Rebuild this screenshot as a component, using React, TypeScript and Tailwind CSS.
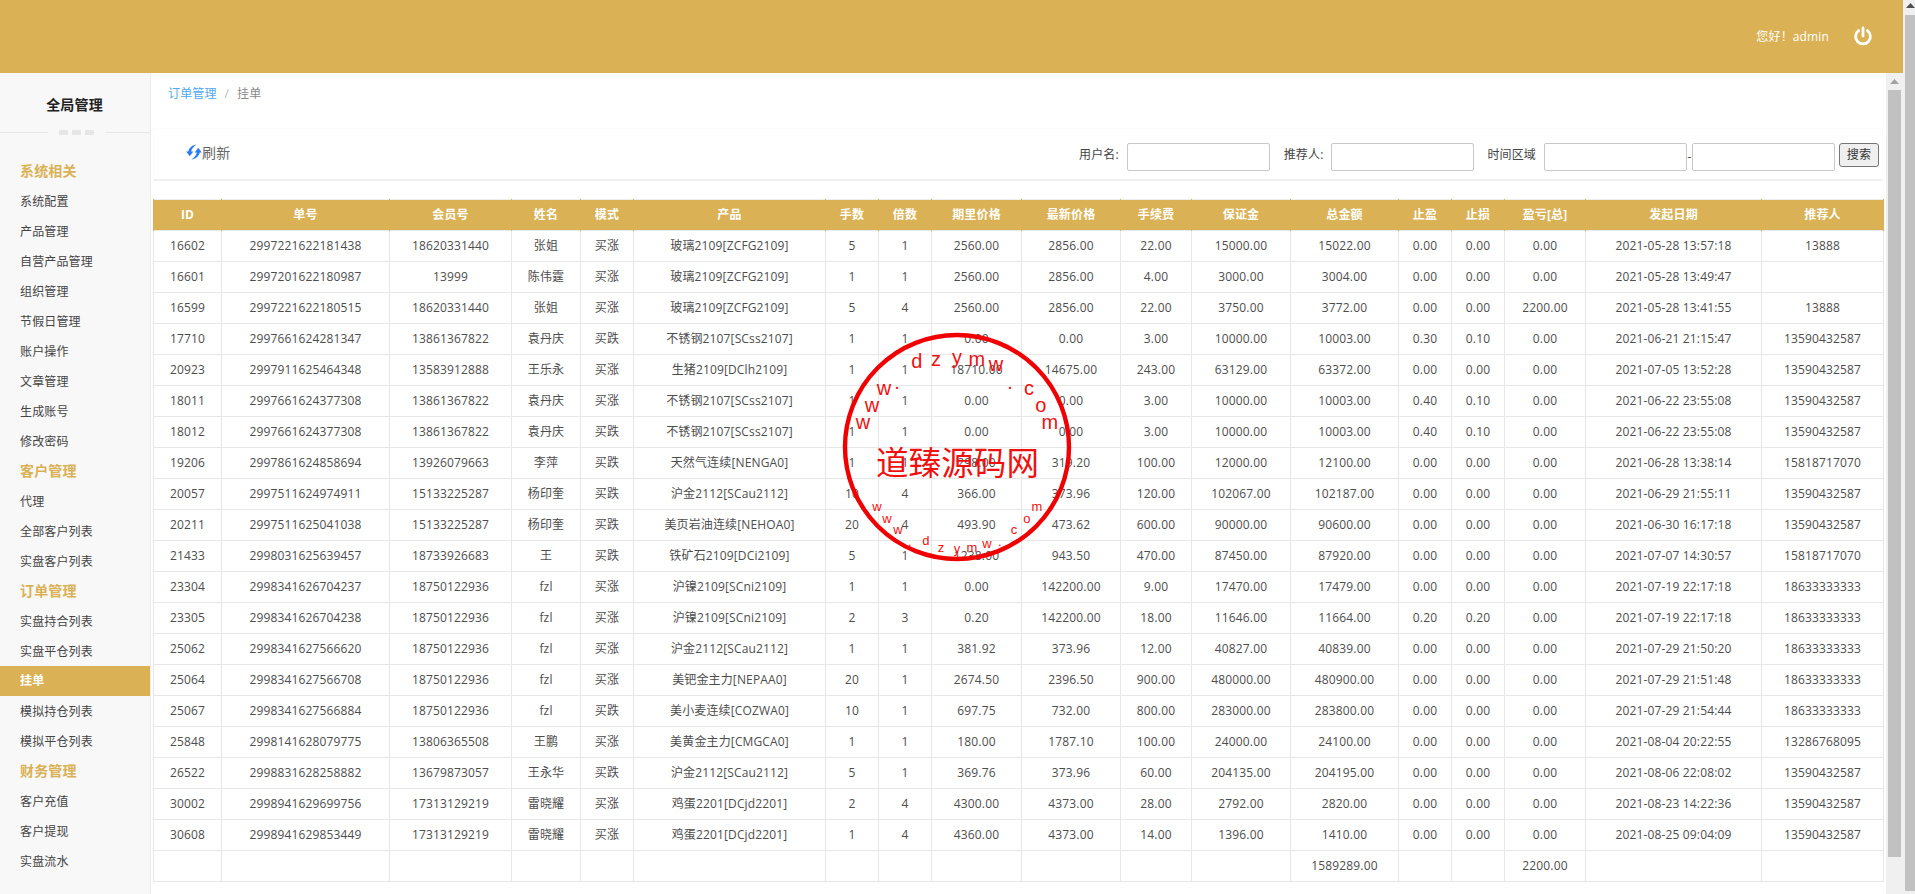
import { Fragment } from "react";

const GOLD = "bg-[#dab154]";

const menu = [
  { group: "系统相关", items: ["系统配置", "产品管理", "自营产品管理", "组织管理", "节假日管理", "账户操作", "文章管理", "生成账号", "修改密码"] },
  { group: "客户管理", items: ["代理", "全部客户列表", "实盘客户列表"] },
  { group: "订单管理", items: ["实盘持合列表", "实盘平仓列表", "挂单", "模拟持仓列表", "模拟平仓列表"] },
  { group: "财务管理", items: ["客户充值", "客户提现", "实盘流水"] },
];

const columns = [
  { title: "ID", width: "w-[68px]" },
  { title: "单号", width: "w-[168px]" },
  { title: "会员号", width: "w-[122px]" },
  { title: "姓名", width: "w-[69px]" },
  { title: "模式", width: "w-[53px]" },
  { title: "产品", width: "w-[192px]" },
  { title: "手数", width: "w-[53px]" },
  { title: "倍数", width: "w-[53px]" },
  { title: "期里价格", width: "w-[90px]" },
  { title: "最新价格", width: "w-[99px]" },
  { title: "手续费", width: "w-[71px]" },
  { title: "保证金", width: "w-[99px]" },
  { title: "总金额", width: "w-[108px]" },
  { title: "止盈", width: "w-[53px]" },
  { title: "止损", width: "w-[53px]" },
  { title: "盈亏[总]", width: "w-[81px]" },
  { title: "发起日期", width: "w-[176px]" },
  { title: "推荐人", width: "w-[122px]" },
];

const R = "13590432587";
const F = "18633333333";
const rows = [
  ["16602", "2997221622181438", "18620331440", "张姐", "买涨", "玻璃2109[ZCFG2109]", "5", "1", "2560.00", "2856.00", "22.00", "15000.00", "15022.00", "0.00", "0.00", "0.00", "2021-05-28 13:57:18", "13888"],
  ["16601", "2997201622180987", "13999", "陈伟霆", "买涨", "玻璃2109[ZCFG2109]", "1", "1", "2560.00", "2856.00", "4.00", "3000.00", "3004.00", "0.00", "0.00", "0.00", "2021-05-28 13:49:47", ""],
  ["16599", "2997221622180515", "18620331440", "张姐", "买涨", "玻璃2109[ZCFG2109]", "5", "4", "2560.00", "2856.00", "22.00", "3750.00", "3772.00", "0.00", "0.00", "2200.00", "2021-05-28 13:41:55", "13888"],
  ["17710", "2997661624281347", "13861367822", "袁丹庆", "买跌", "不锈钢2107[SCss2107]", "1", "1", "0.00", "0.00", "3.00", "10000.00", "10003.00", "0.30", "0.10", "0.00", "2021-06-21 21:15:47", R],
  ["20923", "2997911625464348", "13583912888", "王乐永", "买涨", "生猪2109[DClh2109]", "1", "1", "18710.00", "14675.00", "243.00", "63129.00", "63372.00", "0.00", "0.00", "0.00", "2021-07-05 13:52:28", R],
  ["18011", "2997661624377308", "13861367822", "袁丹庆", "买涨", "不锈钢2107[SCss2107]", "1", "1", "0.00", "0.00", "3.00", "10000.00", "10003.00", "0.40", "0.10", "0.00", "2021-06-22 23:55:08", R],
  ["18012", "2997661624377308", "13861367822", "袁丹庆", "买跌", "不锈钢2107[SCss2107]", "1", "1", "0.00", "0.00", "3.00", "10000.00", "10003.00", "0.40", "0.10", "0.00", "2021-06-22 23:55:08", R],
  ["19206", "2997861624858694", "13926079663", "李萍", "买跌", "天然气连续[NENGA0]", "1", "1", "298.00", "319.20", "100.00", "12000.00", "12100.00", "0.00", "0.00", "0.00", "2021-06-28 13:38:14", "15818717070"],
  ["20057", "2997511624974911", "15133225287", "杨印奎", "买跌", "沪金2112[SCau2112]", "10", "4", "366.00", "373.96", "120.00", "102067.00", "102187.00", "0.00", "0.00", "0.00", "2021-06-29 21:55:11", R],
  ["20211", "2997511625041038", "15133225287", "杨印奎", "买跌", "美页岩油连续[NEHOA0]", "20", "4", "493.90", "473.62", "600.00", "90000.00", "90600.00", "0.00", "0.00", "0.00", "2021-06-30 16:17:18", R],
  ["21433", "2998031625639457", "18733926683", "王", "买跌", "铁矿石2109[DCi2109]", "5", "1", "1238.00", "943.50", "470.00", "87450.00", "87920.00", "0.00", "0.00", "0.00", "2021-07-07 14:30:57", "15818717070"],
  ["23304", "2998341626704237", "18750122936", "fzl", "买涨", "沪镍2109[SCni2109]", "1", "1", "0.00", "142200.00", "9.00", "17470.00", "17479.00", "0.00", "0.00", "0.00", "2021-07-19 22:17:18", F],
  ["23305", "2998341626704238", "18750122936", "fzl", "买涨", "沪镍2109[SCni2109]", "2", "3", "0.20", "142200.00", "18.00", "11646.00", "11664.00", "0.20", "0.20", "0.00", "2021-07-19 22:17:18", F],
  ["25062", "2998341627566620", "18750122936", "fzl", "买涨", "沪金2112[SCau2112]", "1", "1", "381.92", "373.96", "12.00", "40827.00", "40839.00", "0.00", "0.00", "0.00", "2021-07-29 21:50:20", F],
  ["25064", "2998341627566708", "18750122936", "fzl", "买涨", "美钯金主力[NEPAA0]", "20", "1", "2674.50", "2396.50", "900.00", "480000.00", "480900.00", "0.00", "0.00", "0.00", "2021-07-29 21:51:48", F],
  ["25067", "2998341627566884", "18750122936", "fzl", "买跌", "美小麦连续[COZWA0]", "10", "1", "697.75", "732.00", "800.00", "283000.00", "283800.00", "0.00", "0.00", "0.00", "2021-07-29 21:54:44", F],
  ["25848", "2998141628079775", "13806365508", "王鹏", "买涨", "美黄金主力[CMGCA0]", "1", "1", "180.00", "1787.10", "100.00", "24000.00", "24100.00", "0.00", "0.00", "0.00", "2021-08-04 20:22:55", "13286768095"],
  ["26522", "2998831628258882", "13679873057", "王永华", "买跌", "沪金2112[SCau2112]", "5", "1", "369.76", "373.96", "60.00", "204135.00", "204195.00", "0.00", "0.00", "0.00", "2021-08-06 22:08:02", R],
  ["30002", "2998941629699756", "17313129219", "雷晓耀", "买涨", "鸡蛋2201[DCjd2201]", "2", "4", "4300.00", "4373.00", "28.00", "2792.00", "2820.00", "0.00", "0.00", "0.00", "2021-08-23 14:22:36", R],
  ["30608", "2998941629853449", "17313129219", "雷晓耀", "买涨", "鸡蛋2201[DCjd2201]", "1", "4", "4360.00", "4373.00", "14.00", "1396.00", "1410.00", "0.00", "0.00", "0.00", "2021-08-25 09:04:09", R],
  ["", "", "", "", "", "", "", "", "", "", "", "", "1589289.00", "", "", "2200.00", "", ""],
];

// watermark letters: [char, x, y] inside the 260px stamp box
const stampTop: [string, number, number][] = [
  ["w", 43, 102], ["w", 52, 85], ["w", 64, 68], [".", 77, 62], ["d", 97, 41], ["z", 116, 39], ["y", 137, 37],
  ["m", 157, 39], ["w", 176, 44], [".", 190, 62], ["c", 209, 68], ["o", 221, 85], ["m", 230, 102],
];
const stampBottom: [string, number, number][] = [
  ["w", 57, 186], ["w", 67, 198], ["w", 78, 209], [".", 90, 221], ["d", 106, 220], ["z", 121, 227], ["y", 137, 228],
  ["m", 152, 227], ["w", 167, 223], [".", 180, 221], ["c", 194, 209], ["o", 207, 198], ["m", 217, 186],
];

function Arrow({ color }: { color: string }) {
  return (
    <svg width="9" height="5" viewBox="0 0 9 5" className="block">
      <path d="M4.5 0 9 5H0z" fill={color} />
    </svg>
  );
}

function Field({ label, gap }: { label: string; gap: string }) {
  return (
    <div className={`flex items-start ${gap}`}>
      <span className="h-[24px] leading-[24px] text-[12px] text-[#444] mr-[8px]">{label}</span>
      <input className="w-[143px] h-[28px] bg-white border border-[#c8c8c8] rounded-[2px]" />
    </div>
  );
}

function Sidebar() {
  return (
    <aside className="w-[151px] shrink-0 bg-[#f8f8f8] border-r border-[#ececec]">
      <div className="h-[57px] pt-[5px] flex items-center justify-center text-[14px] font-bold text-[#222] pr-[1px]">
        全局管理
      </div>
      <div className="flex items-center h-[5px]">
        <div className="w-[48px] h-[1px] bg-[#e6e6e6]" />
        <div className="flex gap-[4px] ml-[11px]">
          <div className="w-[9px] h-[5px] bg-[#e6e6e6]" />
          <div className="w-[9px] h-[5px] bg-[#e6e6e6]" />
          <div className="w-[9px] h-[5px] bg-[#e6e6e6]" />
        </div>
        <div className="flex-1 ml-[11px] h-[1px] bg-[#e6e6e6]" />
      </div>
      <nav className="mt-[21px]">
        {menu.map((m) => (
          <Fragment key={m.group}>
            <div className="h-[30px] leading-[30px] pl-[20px] text-[14px] font-bold text-[#dab154]">{m.group}</div>
            {m.items.map((item) =>
              item === "挂单" ? (
                <div key={item} className={`h-[30px] leading-[30px] pl-[20px] text-[12px] font-bold text-white ${GOLD}`}>
                  {item}
                </div>
              ) : (
                <div key={item} className="h-[30px] leading-[32px] pl-[20px] text-[12px] text-[#444]">
                  {item}
                </div>
              )
            )}
          </Fragment>
        ))}
      </nav>
    </aside>
  );
}

export default function App() {
  return (
    <div className="relative flex w-[1915px] h-[894px] overflow-hidden bg-white font-['Open_Sans','Noto_Sans_CJK_SC',sans-serif] tracking-[0.14px]">
      <div className="w-[1903px] shrink-0 flex flex-col">
        {/* top bar */}
        <header className={`h-[73px] shrink-0 flex items-center justify-end text-white ${GOLD}`}>
          <span className="text-[12px] mr-[24px]">您好！admin</span>
          <svg width="20" height="20" viewBox="0 0 20 20" fill="none" stroke="white" strokeWidth="2.8" strokeLinecap="round" className="mr-[30px] mb-[1px]">
            <path d="M10 2v8" />
            <path d="M5.6 4.6a7.4 7.4 0 1 0 8.8 0" />
          </svg>
        </header>

        <div className="flex flex-1 min-h-0">
          <Sidebar />

          <main className="flex-1 pl-[2px] min-w-0">
            <div className="h-[55px] pl-[15px] pt-[12px] text-[12px] leading-[18px]">
              <span className="text-[#4fa8ef]">订单管理</span>
              <span className="text-[#bbb] mx-[8px]">/</span>
              <span className="text-[#888]">挂单</span>
            </div>

            {/* toolbar */}
            <div className="w-[1730px] h-[53px] border border-b-2 border-[#fbfbfb] border-b-[#f0f0f0] flex items-start pt-[14px] pr-[3px]">
              <div className="flex items-center ml-[32px] mt-[-3px] h-[24px]">
                <svg width="16" height="16" viewBox="0 0 16 16" fill="#2b7bf2">
                  <path d="M10.5.6C6.6 1 3 3.6 2.3 7.6H.2l3.5 4.6 3.6-4.6H5.2c.4-2.8 2.5-5 5.3-7z" />
                  <path d="M5.5 15.4c3.9-.4 7.5-3 8.2-7h2.1l-3.5-4.6-3.6 4.6h2.1c-.4 2.8-2.5 5-5.3 7z" />
                </svg>
                <span className="text-[14px] text-[#666]">刷新</span>
              </div>
              <div className="flex-1" />
              <Field label="用户名:" gap="" />
              <Field label="推荐人:" gap="ml-[14px]" />
              <div className="flex items-start ml-[13px]">
                <span className="h-[24px] leading-[24px] text-[12px] text-[#444] mr-[8px]">时间区域</span>
                <input className="w-[143px] h-[28px] bg-white border border-[#c8c8c8] rounded-[2px]" />
                <span className="w-[5px] h-[24px] leading-[28px] text-center text-[12px] text-[#444]">-</span>
                <input className="w-[143px] h-[28px] bg-white border border-[#c8c8c8] rounded-[2px]" />
              </div>
              <button className="ml-[4px] w-[40px] h-[24px] text-[12px] text-[#333] bg-[#efefef] border border-[#767676] rounded-[3px]">
                搜索
              </button>
            </div>

            {/* orders table */}
            <table className="mt-[18px] w-[1730px] table-fixed border-collapse text-[12px] text-[#4d4d4d] text-center">
              <colgroup>
                {columns.map((c) => (
                  <col key={c.title} className={c.width} />
                ))}
              </colgroup>
              <thead>
                <tr className={`h-[31px] border-t border-[#eeeeee] ${GOLD}`}>
                  {columns.map((c) => (
                    <th key={c.title} className="font-bold text-white p-0 border-x border-[#dab154]">
                      {c.title}
                    </th>
                  ))}
                </tr>
              </thead>
              <tbody>
                {rows.map((row, i) => (
                  <tr key={i} className="h-[31px]">
                    {row.map((cell, j) => (
                      <td key={j} className="border border-[#e7e7e7] p-0 whitespace-nowrap">
                        {cell}
                      </td>
                    ))}
                  </tr>
                ))}
              </tbody>
            </table>
          </main>

          {/* inner scrollbar */}
          <div className="w-[17px] shrink-0 bg-[#f0f0f0] flex flex-col items-center pt-[6px]">
            <Arrow color="#a3a3a3" />
            <div className="w-[13px] h-[767px] mt-[6px] bg-[#c1c1c1]" />
          </div>
        </div>
      </div>

      {/* outer scrollbar, cut off by the window */}
      <div className="w-[12px] shrink-0 bg-[#f0f0f0] pl-[2px] pt-[3px]">
        <div className="pl-[1px]">
          <Arrow color="#505050" />
        </div>
        <div className="w-[10px] h-[876px] mt-[7px] bg-[#c1c1c1]" />
      </div>

      {/* watermark stamp over the table */}
      <svg width="260" height="260" viewBox="0 0 260 260" className="absolute left-[820px] top-[320px] pointer-events-none" fill="#f01010" textAnchor="middle" dominantBaseline="central">
        <circle cx="137" cy="127" r="112" fill="none" stroke="#f00000" strokeWidth="4.4" />
        {stampTop.map(([c, x, y], i) => (
          <text key={i} x={x} y={y} fontSize="20" fontFamily="Liberation Sans, sans-serif">
            {c}
          </text>
        ))}
        {stampBottom.map(([c, x, y], i) => (
          <text key={i} x={x} y={y} fontSize="13" fontFamily="Liberation Sans, sans-serif">
            {c}
          </text>
        ))}
        <text x="137.5" y="140" fontSize="32.5" fontFamily="Noto Sans CJK SC, sans-serif">
          道臻源码网
        </text>
      </svg>
    </div>
  );
}
